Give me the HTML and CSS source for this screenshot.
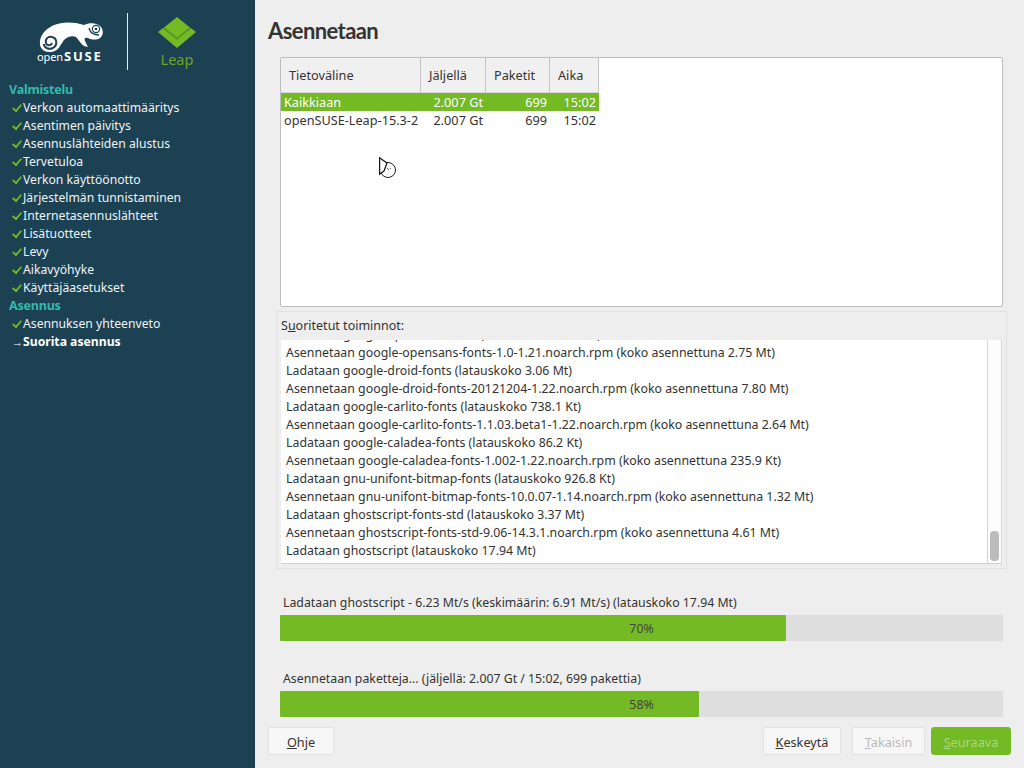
FILE: index.html
```html
<!DOCTYPE html>
<html lang="fi">
<head>
<meta charset="utf-8">
<title>Asennetaan</title>
<link rel="stylesheet" href="styles.css">
</head>
<body>
<aside class="sidebar">
  <div class="logos">
    <div class="suse">
      <svg class="geeko" width="68" height="34" viewBox="37 20 68 34">
        <path fill="#fff" d="M40 45C39 37 44 30 52 26C60 22 72 21 84 25C90 22 98 23 101 27C104 31 103 36 100 38C97 40 92 40 88 38C85 37 84 38 85 41L88 47L84 46C81 44 79 40 76 37C72 35 67 37 64 40L60 46C58 50 54 52 49 52C44 52 41 49 40 45Z"/>
        <path fill="none" stroke="#1c4153" stroke-width="2" d="M44 44C44 48 49 50 53 48C58 45 57 38 52 37C48 36 45 39 46 43C47 46 51 46 52 43"/>
        <path fill="none" stroke="#1c4153" stroke-width="1.300" d="M89 28C90 32 93 35 99 35"/>
        <circle cx="96" cy="29" r="3.600" fill="#fff" stroke="#1c4153" stroke-width="1.200"/>
        <circle cx="96" cy="29" r="1.300" fill="#1c4153"/>
      </svg>
      <div class="suse-name"><span class="open">open</span><span class="bold">SUSE</span></div>
    </div>
    <div class="logo-sep"></div>
    <div class="leap">
      <svg width="40" height="34" viewBox="0 0 40 34">
        <path fill="#73ba25" d="M20 0L33 10.500L20 21L7 10.500Z"/>
        <path fill="#5f9e1f" d="M7 10.500L20 21L33 10.500L35 12L20 24L5 12Z"/>
        <path fill="#73ba25" d="M1 15L5.500 11.500L20 23L34.500 11.500L39 15L20 31Z"/>
      </svg>
      <div class="leap-name">Leap</div>
    </div>
  </div>
  <nav class="steps">
    <div class="step-head">Valmistelu</div>
    <div class="step"><span class="tick"></span>Verkon automaattimääritys</div>
    <div class="step"><span class="tick"></span>Asentimen päivitys</div>
    <div class="step"><span class="tick"></span>Asennuslähteiden alustus</div>
    <div class="step"><span class="tick"></span>Tervetuloa</div>
    <div class="step"><span class="tick"></span>Verkon käyttöönotto</div>
    <div class="step"><span class="tick"></span>Järjestelmän tunnistaminen</div>
    <div class="step"><span class="tick"></span>Internetasennuslähteet</div>
    <div class="step"><span class="tick"></span>Lisätuotteet</div>
    <div class="step"><span class="tick"></span>Levy</div>
    <div class="step"><span class="tick"></span>Aikavyöhyke</div>
    <div class="step"><span class="tick"></span>Käyttäjäasetukset</div>
    <div class="step-head">Asennus</div>
    <div class="step"><span class="tick"></span>Asennuksen yhteenveto</div>
    <div class="step current"><span class="arrow">→</span>Suorita asennus</div>
  </nav>
</aside>
<main class="main">
  <h1 class="title">Asennetaan</h1>
  <section class="media">
    <div class="grid">
      <div class="cell head">Tietoväline</div>
      <div class="cell head">Jäljellä</div>
      <div class="cell head">Paketit</div>
      <div class="cell head">Aika</div>
      <div class="cell sel tl">Kaikkiaan</div>
      <div class="cell sel tr">2.007 Gt</div>
      <div class="cell sel tr">699</div>
      <div class="cell sel tr">15:02</div>
      <div class="cell tl">openSUSE-Leap-15.3-2</div>
      <div class="cell tr">2.007 Gt</div>
      <div class="cell tr">699</div>
      <div class="cell tr">15:02</div>
    </div>
    <svg class="cursor" width="18" height="22" viewBox="0 0 18 22">
      <circle cx="9" cy="13" r="7.500" fill="#fff" stroke="#222"/>
      <path fill="#fff" stroke="#111" stroke-width="1.200" d="M0.600 0.800V17L5 14L8 6Z"/>
      <path stroke="#666" fill="none" d="M8 11L10 13M12 11L11 12"/>
    </svg>
  </section>
  <section class="log-group">
    <div class="log-label">S<u>u</u>oritetut toiminnot:</div>
    <div class="log">
      <div class="log-lines">
        <div>Ladataan google-opensans-fonts (latauskoko 738.1 Kt)</div>
        <div>Asennetaan google-opensans-fonts-1.0-1.21.noarch.rpm (koko asennettuna 2.75 Mt)</div>
        <div>Ladataan google-droid-fonts (latauskoko 3.06 Mt)</div>
        <div>Asennetaan google-droid-fonts-20121204-1.22.noarch.rpm (koko asennettuna 7.80 Mt)</div>
        <div>Ladataan google-carlito-fonts (latauskoko 738.1 Kt)</div>
        <div>Asennetaan google-carlito-fonts-1.1.03.beta1-1.22.noarch.rpm (koko asennettuna 2.64 Mt)</div>
        <div>Ladataan google-caladea-fonts (latauskoko 86.2 Kt)</div>
        <div>Asennetaan google-caladea-fonts-1.002-1.22.noarch.rpm (koko asennettuna 235.9 Kt)</div>
        <div>Ladataan gnu-unifont-bitmap-fonts (latauskoko 926.8 Kt)</div>
        <div>Asennetaan gnu-unifont-bitmap-fonts-10.0.07-1.14.noarch.rpm (koko asennettuna 1.32 Mt)</div>
        <div>Ladataan ghostscript-fonts-std (latauskoko 3.37 Mt)</div>
        <div>Asennetaan ghostscript-fonts-std-9.06-14.3.1.noarch.rpm (koko asennettuna 4.61 Mt)</div>
        <div>Ladataan ghostscript (latauskoko 17.94 Mt)</div>
      </div>
      <div class="scrollbar"><div class="thumb"></div></div>
    </div>
  </section>
  <section class="progress first-progress">
    <div class="progress-label">Ladataan ghostscript - 6.23 Mt/s (keskimäärin: 6.91 Mt/s) (latauskoko 17.94 Mt)</div>
    <div class="bar"><div class="fill" style="width:70%"></div><span class="pct">70%</span></div>
  </section>
  <section class="progress second-progress">
    <div class="progress-label">Asennetaan paketteja... (jäljellä: 2.007 Gt / 15:02, 699 pakettia)</div>
    <div class="bar"><div class="fill" style="width:58%"></div><span class="pct">58%</span></div>
  </section>
  <footer class="buttons">
    <button class="btn help"><u>O</u>hje</button>
    <button class="btn abort"><u>K</u>eskeytä</button>
    <button class="btn back" disabled><u>T</u>akaisin</button>
    <button class="btn next" disabled><u>S</u>euraava</button>
  </footer>
</main>
</body>
</html>
```
FILE: styles.css
```css
* { box-sizing: border-box; }
html, body { margin: 0; height: 100%; }
body {
  display: flex;
  width: 1024px;
  height: 768px;
  overflow: hidden;
  background: #eeeeee;
  color: #333;
  font: 12.5px/18px "Noto Sans", sans-serif;
}
.sidebar {
  width: 255px;
  flex: none;
  background: #1c4153;
  color: #eef3f5;
  padding: 13px 0 0 9px;
}
.logos { display: flex; height: 57px; margin-bottom: 11px; }
.suse { width: 96px; padding: 7px 0 0 28px; white-space: nowrap; }
.geeko { display: block; }
.suse-name { color: #fff; line-height: 13px; margin-top: -4px; }
.open { font-size: 11px; letter-spacing: -0.1px; }
.bold { font-weight: 700; font-size: 13px; letter-spacing: 1.8px; margin-left: 1px; }
.logo-sep { width: 1px; height: 57px; background: #e8eef0; margin-left: 22px; }
.leap { margin-left: 29px; padding-top: 4px; width: 40px; text-align: center; }
.leap svg { display: block; }
.leap-name { color: #6aa62a; font-size: 14.5px; line-height: 18px; margin-top: -1px; }
.steps { display: flex; flex-direction: column; }
.step-head { color: #35b9ab; font-weight: 700; height: 18px; letter-spacing: -0.2px; }
.step { height: 18px; white-space: nowrap; display: flex; align-items: flex-start; font-size: 12.2px; }
.tick { width: 14px; height: 18px; flex: none; position: relative; }
.tick::before {
  content: "";
  position: absolute;
  left: 3px;
  top: 5px;
  width: 8px;
  height: 4px;
  border-left: 2px solid #73ba25;
  border-bottom: 2px solid #73ba25;
  transform: rotate(-50deg) scale(.9);
}
.arrow { width: 14px; padding-left: 3px; color: #fff; font-size: 11px; flex: none; }
.current { font-weight: 700; color: #fff; }
.main { flex: 1; display: flex; flex-direction: column; padding: 0 13px 13px; min-width: 0; }
.title { margin: 16px 0 0; font: 700 22px/30px Lato, "Noto Sans", sans-serif; letter-spacing: -0.6px; color: #333; }
.media {
  position: relative;
  margin: 11px 8px 0 12px;
  height: 250px;
  flex: none;
  background: #fff;
  border: 1px solid #bdbdbd;
  border-radius: 2px;
}
.grid {
  display: grid;
  grid-template-columns: 140px 65px 64px 49px;
  grid-template-rows: 35px 18px 18px;
  width: 318px;
  font-size: 12.7px;
}
.cell { white-space: nowrap; padding: 0 3px; line-height: 18px; height: 18px; }
.head {
  height: 35px;
  line-height: 35px;
  padding-left: 8px;
  background: #f0f0f0;
  border-right: 1px solid #c4c4c4;
  border-bottom: 1px solid #d8d8d8;
}
.sel { background: #73ba25; color: #fff; }
.tl { text-align: left; }
.tr { text-align: right; }
.cursor { position: absolute; left: 98px; top: 99px; }
.log-group {
  margin: 4px 4px 0 8px;
  height: 258px;
  flex: none;
  border: 1px solid #e2e2e2;
  padding: 5px 4px 4px;
  display: flex;
  flex-direction: column;
}
.log-label { height: 23px; flex: none; }
.log {
  flex: 1;
  display: flex;
  background: #fff;
  border-bottom: 1px solid #cfcfcf;
  border-right: 1px solid #d8d8d8;
  min-height: 0;
  overflow: hidden;
}
.log-lines {
  flex: 1;
  padding: 0 0 3px 5px;
  white-space: nowrap;
  overflow: hidden;
  display: flex;
  flex-direction: column;
  justify-content: flex-end;
  font-size: 12.35px;
}
.scrollbar { width: 14px; flex: none; border-left: 1px solid #d4d4d4; position: relative; background: #fdfdfd; }
.thumb { position: absolute; left: 2px; right: 2px; bottom: 2px; height: 30px; background: #bcbcbc; border-radius: 4px; }
.progress { flex: none; margin: 0 8px 0 12px; }
.first-progress { margin-top: 24px; }
.second-progress { margin-top: 28px; }
.progress-label { height: 22px; padding-left: 3px; line-height: 20px; font-size: 12.3px; }
.bar { position: relative; height: 26px; background: #dedede; }
.fill { height: 100%; background: #73ba25; border-radius: 1px; }
.pct { position: absolute; inset: 0; text-align: center; line-height: 28px; color: #444; font-size: 12.3px; }
.buttons { display: flex; margin-top: 10px; height: 28px; flex: none; }
.btn {
  font: inherit;
  font-size: 12.7px;
  height: 28px;
  padding: 1px 0 0;
  background: #f6f6f6;
  color: #333;
  border: 1px solid #e2e2e2;
  border-radius: 2px;
}
.help { width: 66px; margin-right: auto; }
.abort { width: 78px; }
.back { width: 73px; margin-left: 11px; color: #bbb; }
.next { width: 80px; margin-left: 6px; background: #73ba25; border-color: #73ba25; color: #a9d77a; border-radius: 3px; }
```
